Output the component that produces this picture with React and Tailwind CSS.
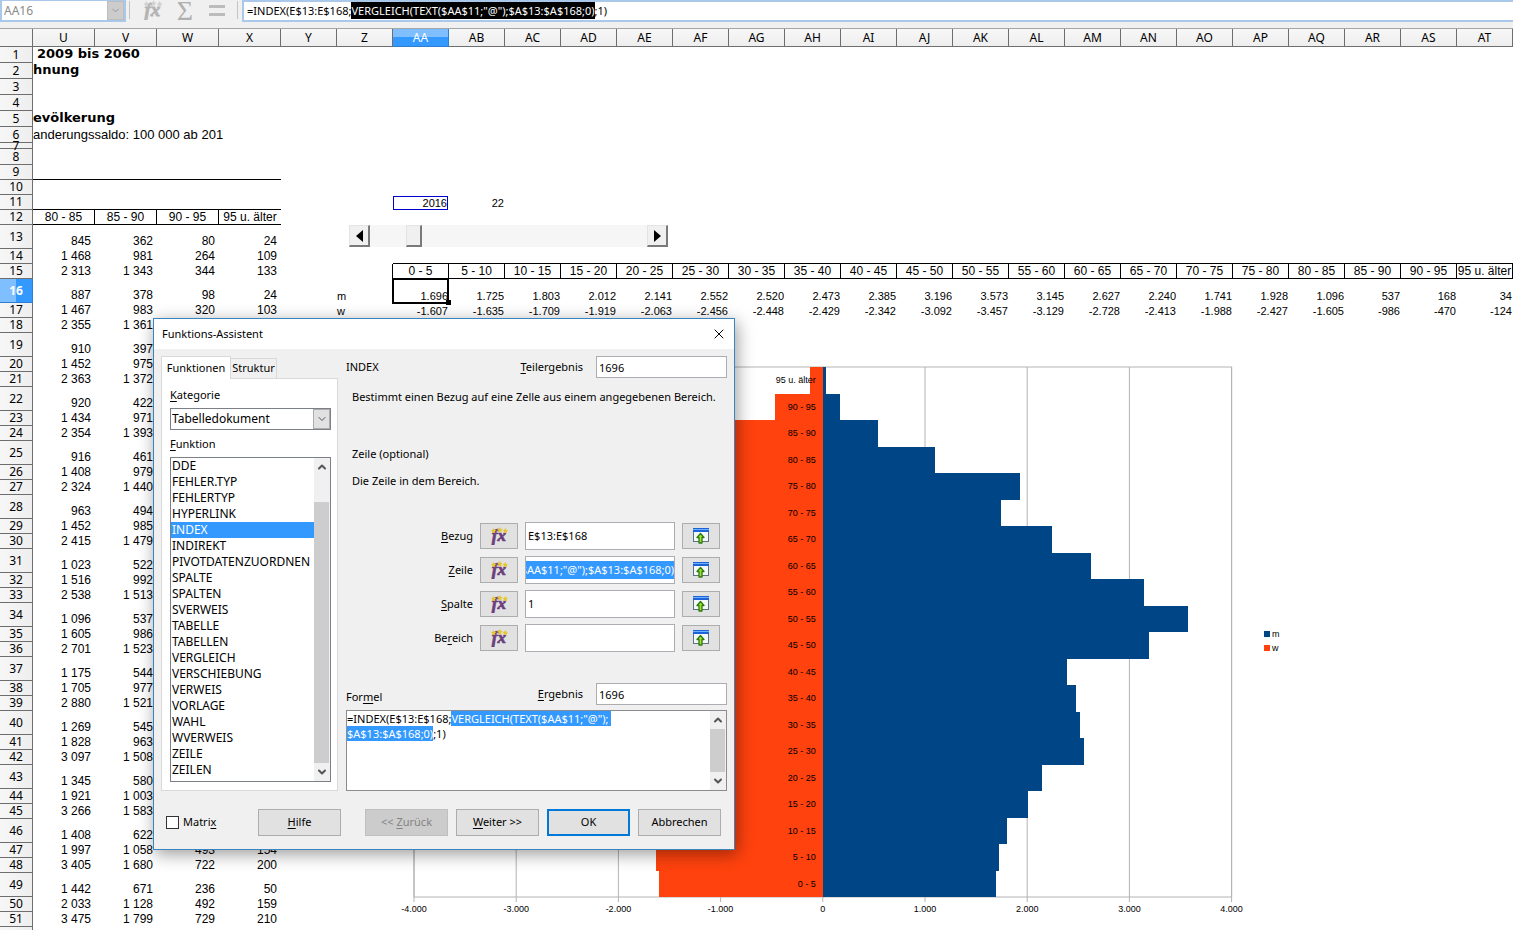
import { useEffect, useRef } from "react";
import { ChevronDown, ChevronUp, X } from "lucide-react";
import clsx from "clsx";

const ageColumns = [
  { name: "AA", label: "0 - 5", m: 1696, w: -1607 },
  { name: "AB", label: "5 - 10", m: 1725, w: -1635 },
  { name: "AC", label: "10 - 15", m: 1803, w: -1709 },
  { name: "AD", label: "15 - 20", m: 2012, w: -1919 },
  { name: "AE", label: "20 - 25", m: 2141, w: -2063 },
  { name: "AF", label: "25 - 30", m: 2552, w: -2456 },
  { name: "AG", label: "30 - 35", m: 2520, w: -2448 },
  { name: "AH", label: "35 - 40", m: 2473, w: -2429 },
  { name: "AI", label: "40 - 45", m: 2385, w: -2342 },
  { name: "AJ", label: "45 - 50", m: 3196, w: -3092 },
  { name: "AK", label: "50 - 55", m: 3573, w: -3457 },
  { name: "AL", label: "55 - 60", m: 3145, w: -3129 },
  { name: "AM", label: "60 - 65", m: 2627, w: -2728 },
  { name: "AN", label: "65 - 70", m: 2240, w: -2413 },
  { name: "AO", label: "70 - 75", m: 1741, w: -1988 },
  { name: "AP", label: "75 - 80", m: 1928, w: -2427 },
  { name: "AQ", label: "80 - 85", m: 1096, w: -1605 },
  { name: "AR", label: "85 - 90", m: 537, w: -986 },
  { name: "AS", label: "90 - 95", m: 168, w: -470 },
  { name: "AT", label: "95 u. älter", m: 34, w: -124 },
];

const wideColumns = ["U", "V", "W", "X"];
const wideLabels = ["80 - 85", "85 - 90", "90 - 95", "95 u. älter"];

// rows 13 and up, columns U to X
const population = [
  ["845", "362", "80", "24"],
  ["1 468", "981", "264", "109"],
  ["2 313", "1 343", "344", "133"],
  ["887", "378", "98", "24"],
  ["1 467", "983", "320", "103"],
  ["2 355", "1 361"],
  ["910", "397"],
  ["1 452", "975"],
  ["2 363", "1 372"],
  ["920", "422"],
  ["1 434", "971"],
  ["2 354", "1 393"],
  ["916", "461"],
  ["1 408", "979"],
  ["2 324", "1 440"],
  ["963", "494"],
  ["1 452", "985"],
  ["2 415", "1 479"],
  ["1 023", "522"],
  ["1 516", "992"],
  ["2 538", "1 513"],
  ["1 096", "537"],
  ["1 605", "986"],
  ["2 701", "1 523"],
  ["1 175", "544"],
  ["1 705", "977"],
  ["2 880", "1 521"],
  ["1 269", "545"],
  ["1 828", "963"],
  ["3 097", "1 508"],
  ["1 345", "580"],
  ["1 921", "1 003"],
  ["3 266", "1 583"],
  ["1 408", "622"],
  ["1 997", "1 058", "493", "154"],
  ["3 405", "1 680", "722", "200"],
  ["1 442", "671", "236", "50"],
  ["2 033", "1 128", "492", "159"],
  ["3 475", "1 799", "729", "210"],
];

const functionNames = [
  "DDE",
  "FEHLER.TYP",
  "FEHLERTYP",
  "HYPERLINK",
  "INDEX",
  "INDIREKT",
  "PIVOTDATENZUORDNEN",
  "SPALTE",
  "SPALTEN",
  "SVERWEIS",
  "TABELLE",
  "TABELLEN",
  "VERGLEICH",
  "VERSCHIEBUNG",
  "VERWEIS",
  "VORLAGE",
  "WAHL",
  "WVERWEIS",
  "ZEILE",
  "ZEILEN",
];

const titles = {
  1: "2009 bis 2060",
  2: "hnung",
  5: "evölkerung",
};

const formula = '=INDEX(E$13:E$168;VERGLEICH(TEXT($AA$11;"@");\n$A$13:$A$168;0);1)';

const formatNumber = (n) => {
  const s = String(Math.abs(n));
  const text = s.length > 3 ? `${s.slice(0, -3)}.${s.slice(-3)}` : s;
  return n < 0 ? `-${text}` : text;
};

const rowHeight = (row) => {
  if (row === 7) return "h-[6px]";
  if (row <= 8) return "h-[16px]";
  if (row >= 13 && row % 3 === 1) return "h-[24px]";
  return "h-[15px]";
};

// label with its underlined access key
const Key = ({ text, at }) => (
  <>
    {text.slice(0, at)}
    <span className="underline underline-offset-2">{text[at]}</span>
    {text.slice(at + 1)}
  </>
);

const FxGlyph = ({ star, ink, className }) => (
  <svg viewBox="0 0 20 20" className={className} aria-hidden="true">
    <text
      x="2"
      y="16"
      fill={ink}
      stroke={ink}
      strokeWidth="0.8"
      fontSize="19"
      fontStyle="italic"
      fontWeight="bold"
      fontFamily="Liberation Serif, serif"
    >
      fx
    </text>
    <g fill={star}>
      <path d="M4 1l1 2 2 .4-1.400 1.400.3 2.200L4 6l-1.900 1 .300-2.200L1 3.400l2-.4z" />
      <path d="M11 0l1 2 2 .4-1.400 1.400.3 2.200L11 5l-1.900 1 .300-2.200L8 2.400l2-.4z" />
      <path d="M17 1l1 2 2 .4-1.400 1.400.3 2.200L17 6l-1.900 1 .300-2.200L14 3.400l2-.4z" />
    </g>
  </svg>
);

const ShrinkGlyph = () => (
  <svg viewBox="0 0 16 16" className="h-4 w-4" aria-hidden="true">
    <rect x="0.500" y="0.500" width="15" height="13" fill="#f4f8fb" stroke="#5d7284" />
    <rect x="0" y="0" width="16" height="4" fill="#1c62d8" />
    <rect x="0" y="1" width="16" height="1" fill="#6fb0ff" />
    <path
      d="M7.500 5.500L11 9.500H9V15H6V9.500H4z"
      fill="#a4e02a"
      stroke="#2c7a12"
      strokeWidth="1.3"
      strokeLinejoin="round"
    />
  </svg>
);

const Toolbar = () => (
  <header className="flex h-[29px] shrink-0 items-start border-b border-[#a5a5a5] bg-[#f0f0f0]">
    <div className="flex h-[22px] w-[126px] border-2 border-t border-[#a9c8ea] bg-white">
      <input
        aria-label="Namensfeld"
        defaultValue="AA16"
        className="min-w-0 flex-1 px-[2px] text-xs text-[#8a8a8a] outline-none"
      />
      <button
        aria-label="Namen"
        className="flex w-[17px] items-center justify-center border border-[#bdbdbd] bg-[#cccccc] text-[#8f8f8f]"
      >
        <ChevronDown size={11} />
      </button>
    </div>
    <div className="mx-[3px] mt-px h-[18px] w-px bg-[#c4c4c4]" />
    <button aria-label="Funktions-Assistent" className="ml-[9px]">
      <FxGlyph star="#d2d2d2" ink="#b4b4b4" className="h-[20px] w-[21px]" />
    </button>
    <button
      aria-label="Summe"
      className="ml-[12px] h-[22px] w-[20px] font-['Liberation_Serif',serif] text-[28px] leading-[20px] text-[#b0b0b0]"
    >
      Σ
    </button>
    <button aria-label="Funktion" className="mt-[5px] ml-[14px] flex h-[11px] w-[16px] flex-col justify-between">
      <span className="h-[3px] w-full bg-[#bcbcbc]" />
      <span className="h-[3px] w-full bg-[#bcbcbc]" />
    </button>
    <div className="mt-px mr-[4px] ml-[12px] h-[18px] w-px bg-[#c4c4c4]" />
    <div className="grid h-[22px] min-w-0 flex-1 items-center border-2 border-r-0 border-[#a9c8ea] bg-white pl-[3px] text-[11px]">
      <input
        aria-label="Eingabezeile"
        defaultValue={formula.replace("\n", "")}
        className="col-start-1 row-start-1 text-transparent outline-none"
      />
      <p aria-hidden="true" className="pointer-events-none col-start-1 row-start-1 leading-[18px] whitespace-pre">
        =INDEX(E$13:E$168;
        <mark className="bg-black py-px text-white">VERGLEICH(TEXT($AA$11;"@");$A$13:$A$168;0)</mark>
        ;1)
      </p>
    </div>
  </header>
);

const ColumnHeader = ({ name }) => (
  <th
    scope="col"
    className={clsx(
      "h-[18px] border-r border-b p-0 text-center text-xs leading-[15px] font-normal",
      name === "AA"
        ? "border-[#2f7fd0] bg-linear-to-b from-[#80bfff] from-50% to-[#3399ff] to-50% text-white"
        : "border-[#6e6e6e] bg-linear-to-b from-[#f7f7f7] to-[#eeeeee]"
    )}
  >
    {name}
  </th>
);

const RowHeader = ({ row }) => (
  <th
    scope="row"
    className={clsx(
      "border-r border-b p-0 align-middle text-xs",
      row === 16
        ? "border-[#2f7fd0] bg-linear-to-r from-[#80bfff] from-50% to-[#3399ff] to-50% font-bold text-white"
        : "border-[#6e6e6e] bg-linear-to-r from-[#f7f7f7] to-[#eeeeee] font-normal"
    )}
  >
    <div className={clsx("flex items-center justify-center", row === 7 ? "h-[5px]" : "h-[14px]")}>
      {row < 52 && row}
    </div>
  </th>
);

const WideCells = ({ row }) => {
  if (titles[row] || row === 6) {
    return (
      <td colSpan={4} className="overflow-hidden p-0 align-top whitespace-nowrap">
        <div
          className={clsx(
            "text-[13px]",
            row === 6
              ? "font-['Liberation_Sans',sans-serif] leading-[15px]"
              : "font-['DejaVu_Sans',sans-serif] leading-[13px] font-bold",
            row === 1 && "pl-1"
          )}
        >
          {row === 6 ? "anderungssaldo: 100 000 ab 201" : titles[row]}
        </div>
      </td>
    );
  }
  return wideColumns.map((name, i) => (
    <td
      key={name}
      className={clsx(
        "p-0 align-bottom font-['Liberation_Sans',sans-serif] text-xs leading-[14px] whitespace-nowrap",
        (row === 9 || row === 11 || row === 12) && "border-b border-black",
        row === 12 ? "text-center" : "pr-1 text-right",
        row > 12 && "pb-px",
        row === 12 && i < 3 && "border-r"
      )}
    >
      {row === 12 ? wideLabels[i] : population[row - 13]?.[i]}
    </td>
  ));
};

const AgeCell = ({ row, column, index }) => {
  const small = "p-0 pr-px pb-px text-right align-bottom text-[11px] leading-[12px]";
  if (row === 11 && index === 0) {
    return (
      <td className="p-0">
        <div className="mr-px h-[14px] border border-[#0000cc] text-right text-[11px] leading-[13px]">2016</div>
      </td>
    );
  }
  if (row === 11 && index === 1) return <td className={small}>22</td>;
  if (row === 14) return <td className="border-b border-black p-0" />;
  if (row === 15) {
    return (
      <td className="border-r border-b border-black p-0 text-center text-xs leading-[14px] whitespace-nowrap">
        {column.label}
      </td>
    );
  }
  if (row === 16 && index === 0) {
    return (
      <td className={clsx(small, "relative")}>
        {formatNumber(column.m)}
        <div className="absolute -inset-px right-0 border-2 border-black" />
        <div className="absolute -right-[2px] -bottom-[2px] h-[5px] w-[5px] bg-black" />
      </td>
    );
  }
  if (row === 16) return <td className={small}>{formatNumber(column.m)}</td>;
  if (row === 17) return <td className={small}>{formatNumber(column.w)}</td>;
  return <td className="p-0" />;
};

const Sheet = () => {
  const rows = Array.from({ length: 52 }, (_, i) => i + 1);
  return (
    <table className="w-full min-w-[1513px] table-fixed border-separate border-spacing-0">
      <colgroup>
        <col className="w-[33px]" />
        <col span={4} className="w-[62px]" />
        <col span={22} className="w-[56px]" />
      </colgroup>
      <thead>
        <tr>
          <td className="border-r border-b border-[#6e6e6e] bg-[#f4f4f4] p-0" />
          {wideColumns.map((name) => (
            <ColumnHeader key={name} name={name} />
          ))}
          <ColumnHeader name="Y" />
          <ColumnHeader name="Z" />
          {ageColumns.map((column) => (
            <ColumnHeader key={column.name} name={column.name} />
          ))}
        </tr>
      </thead>
      <tbody className="font-['Liberation_Sans',sans-serif]">
        {rows.map((row) => (
          <tr key={row} className={clsx(rowHeight(row), "[&>th]:font-['Noto_Sans',sans-serif]")}>
            <RowHeader row={row} />
            <WideCells row={row} />
            <td className="p-0" />
            <td
              className={clsx(
                "p-0 pb-px align-bottom text-[11px] leading-[12px]",
                row === 15 && "border-r border-black"
              )}
            >
              {row === 16 && "m"}
              {row === 17 && "w"}
            </td>
            {ageColumns.map((column, i) => (
              <AgeCell key={column.name} row={row} column={column} index={i} />
            ))}
          </tr>
        ))}
      </tbody>
    </table>
  );
};

const bevel =
  "flex h-[22px] w-[21px] items-center justify-center border-t border-l border-r-2 border-b-2 border-t-[#e3e3e3] border-l-[#e3e3e3] border-r-[#7a7a7a] border-b-[#7a7a7a] bg-[#f0f0f0]";

const YearScroller = () => (
  <div className="absolute top-[196px] left-[349px] flex w-[319px] bg-[#f6f6f6]">
    <button aria-label="Jahr zurück" className={bevel}>
      <span className="h-0 w-0 border-y-[6px] border-r-[7px] border-y-transparent border-r-black" />
    </button>
    <input
      type="range"
      aria-label="Jahr"
      min="2009"
      max="2060"
      defaultValue="2016"
      className="h-[22px] min-w-0 flex-1 appearance-none bg-transparent [&::-webkit-slider-thumb]:h-[22px] [&::-webkit-slider-thumb]:w-[16px] [&::-webkit-slider-thumb]:appearance-none [&::-webkit-slider-thumb]:border-t [&::-webkit-slider-thumb]:border-r-2 [&::-webkit-slider-thumb]:border-b-2 [&::-webkit-slider-thumb]:border-l [&::-webkit-slider-thumb]:border-t-[#e3e3e3] [&::-webkit-slider-thumb]:border-r-[#7a7a7a] [&::-webkit-slider-thumb]:border-b-[#7a7a7a] [&::-webkit-slider-thumb]:border-l-[#e3e3e3] [&::-webkit-slider-thumb]:bg-[#f0f0f0]"
    />
    <button aria-label="Jahr vor" className={bevel}>
      <span className="h-0 w-0 border-y-[6px] border-l-[7px] border-y-transparent border-l-black" />
    </button>
  </div>
);

const PyramidChart = () => {
  const left = 24;
  const top = 8;
  const step = 26.5;
  const unit = 102.2 / 1000;
  const zero = left + 4000 * unit;
  const bottom = top + step * ageColumns.length;
  const ticks = [-4, -3, -2, -1, 0, 1, 2, 3, 4];
  const barTop = (i) => bottom - step * (i + 1);

  return (
    <svg
      width="900"
      height="560"
      viewBox="0 0 900 560"
      role="img"
      aria-label="Bevölkerungspyramide"
      className="absolute top-[330px] left-[390px] font-['Liberation_Sans',sans-serif] text-[9px]"
    >
      <rect x={left} y={top} width={8000 * unit} height={bottom - top} fill="none" stroke="#b3b3b3" />
      {ticks.map((t) => (
        <line
          key={t}
          x1={zero + t * 1000 * unit}
          x2={zero + t * 1000 * unit}
          y1={top}
          y2={bottom + 5}
          stroke="#b3b3b3"
        />
      ))}
      <g shapeRendering="crispEdges">
        {ageColumns.map((c, i) => (
          <g key={c.name}>
            <rect x={zero + c.w * unit} y={barTop(i)} width={-c.w * unit} height={step} fill="#ff420e" />
            <rect x={zero} y={barTop(i)} width={c.m * unit} height={step} fill="#004586" />
          </g>
        ))}
      </g>
      {ageColumns.map((c, i) => (
        <text key={c.name} x={zero - 7} y={barTop(i) + 16} textAnchor="end">
          {c.label}
        </text>
      ))}
      {ticks.map((t) => (
        <text key={t} x={zero + t * 1000 * unit} y={bottom + 15} textAnchor="middle">
          {formatNumber(t * 1000)}
        </text>
      ))}
      <rect x="874" y="272" width="6" height="6" fill="#004586" />
      <text x="882" y="278">m</text>
      <rect x="874" y="286" width="6" height="6" fill="#ff420e" />
      <text x="882" y="292">w</text>
    </svg>
  );
};

const ScrollBar = ({ thumb }) => (
  <div className="flex w-[16px] shrink-0 flex-col items-center bg-[#f0f0f0] text-[#555555]">
    <ChevronUp size={12} strokeWidth={4} className="my-[3px] shrink-0" />
    <div className={clsx("flex-1 self-stretch", thumb)}>
      <div className="h-full w-[15px] bg-[#cdcdcd]" />
    </div>
    <ChevronDown size={12} strokeWidth={4} className="my-[3px] shrink-0" />
  </div>
);

const FunctionTab = () => (
  <section className="flex w-[177px] shrink-0 flex-col">
    <div role="tablist" className="flex items-end">
      <button
        role="tab"
        aria-selected="true"
        className="relative z-10 -mb-px h-[23px] w-[70px] border border-b-0 border-[#d9d9d9] bg-white"
      >
        Funktionen
      </button>
      <button role="tab" aria-selected="false" className="h-[20px] w-[46px] border border-b-0 border-l-0 border-[#d9d9d9]">
        Struktur
      </button>
    </div>
    <div className="flex flex-1 flex-col border border-[#d9d9d9] bg-white pt-[8px] pr-[6px] pb-[8px] pl-[8px]">
      <label htmlFor="kategorie" className="leading-[16px]">
        <Key text="Kategorie" at={0} />
      </label>
      <div className="relative mt-[5px] text-xs">
        <select
          id="kategorie"
          className="h-[22px] w-full appearance-none border border-[#7a7f88] bg-white px-px outline-none"
        >
          <option>Tabelledokument</option>
        </select>
        <span className="pointer-events-none absolute inset-y-px right-px flex w-[17px] items-center justify-center border border-[#adadad] bg-[#e1e1e1] text-[#555555]">
          <ChevronDown size={12} />
        </span>
      </div>
      <span id="funktion" className="mt-[6px] leading-[16px]">
        <Key text="Funktion" at={0} />
      </span>
      <div className="mt-[5px] flex flex-1 border border-[#7a7f88] text-xs">
        <ul role="listbox" aria-labelledby="funktion" className="min-w-0 flex-1 pb-[2px]">
          {functionNames.map((name) => (
            <li
              key={name}
              role="option"
              aria-selected={name === "INDEX"}
              className={clsx("h-[16px] pl-px leading-[16px]", name === "INDEX" && "bg-[#3399ff] text-white")}
            >
              {name}
            </li>
          ))}
        </ul>
        <ScrollBar thumb="pt-[26px]" />
      </div>
    </div>
  </section>
);

const ArgumentRow = ({ label, at, value, selected }) => {
  const input = useRef(null);

  useEffect(() => {
    // keep the end of a long argument in view
    if (selected) input.current.scrollLeft = input.current.scrollWidth;
  }, [selected]);

  return (
    <div className="flex h-[28px] items-center">
      <label htmlFor={label} className="flex-1 pr-[7px] text-right">
        <Key text={label} at={at} />
      </label>
      <button
        aria-label={`Funktion für ${label}`}
        className="flex h-[26px] w-[38px] items-center justify-center border border-[#adadad] bg-[#e1e1e1]"
      >
        <FxGlyph star="#e6c62e" ink="#6b3f7c" className="h-[18px] w-[18px]" />
      </button>
      <div className="mx-[7px] flex h-[28px] w-[150px] border border-[#abadb3] bg-white">
        <input
          ref={input}
          id={label}
          defaultValue={value}
          className={clsx(
            "w-full outline-none",
            selected ? "bg-[#3399ff] bg-clip-content py-[4px] text-white" : "px-[2px]"
          )}
        />
      </div>
      <button
        aria-label={`${label} verkleinern`}
        className="flex h-[26px] w-[38px] items-center justify-center border border-[#adadad] bg-[#e1e1e1]"
      >
        <ShrinkGlyph />
      </button>
    </div>
  );
};

const ResultField = ({ id, label }) => (
  <div className="flex items-center">
    <label htmlFor={id} className="pr-[13px]">
      <Key text={label} at={0} />
    </label>
    <input
      id={id}
      readOnly
      defaultValue="1696"
      className="h-[22px] w-[131px] border border-[#abadb3] bg-white px-[2px] outline-none"
    />
  </div>
);

const FormulaPane = () => {
  const formulaBox = useRef(null);

  useEffect(() => {
    formulaBox.current.focus();
    formulaBox.current.setSelectionRange(formula.indexOf("VERGLEICH"), formula.lastIndexOf(";"));
  }, []);

  return (
    <section className="flex min-w-0 flex-1 flex-col pl-[8px]">
      <div className="flex items-center justify-between">
        <p>INDEX</p>
        <ResultField id="teilergebnis" label="Teilergebnis" />
      </div>
      <div className="flex flex-col px-[6px] leading-[16px] whitespace-nowrap">
        <p className="mt-[11px]">Bestimmt einen Bezug auf eine Zelle aus einem angegebenen Bereich.</p>
        <p className="mt-[41px]">Zeile (optional)</p>
        <p className="mt-[11px]">Die Zeile in dem Bereich.</p>
      </div>
      <div className="mt-[33px] flex flex-col gap-[6px] pr-[7px]">
        <ArgumentRow label="Bezug" at={0} value="E$13:E$168" />
        <ArgumentRow label="Zeile" at={0} value={'VERGLEICH(TEXT($AA$11;"@");$A$13:$A$168;0)'} selected />
        <ArgumentRow label="Spalte" at={0} value="1" />
        <ArgumentRow label="Bereich" at={2} value="" />
      </div>
      <div className="mt-[31px] flex items-start justify-between">
        <label htmlFor="formel" className="pt-[6px] leading-[16px]">
          <Key text="Formel" at={3} />
        </label>
        <ResultField id="ergebnis" label="Ergebnis" />
      </div>
      <div className="mt-[5px] flex h-[81px] border border-[#8a8c90] bg-white">
        <textarea
          ref={formulaBox}
          id="formel"
          defaultValue={formula}
          className="min-w-0 flex-1 resize-none leading-[15px] outline-none selection:bg-[#3399ff] selection:text-white"
        />
        <ScrollBar />
      </div>
    </section>
  );
};

const dialogButton = "h-[27px] w-[83px] border border-[#adadad] bg-[#e1e1e1]";

const FunctionWizard = () => (
  <div
    role="dialog"
    aria-labelledby="dialog-title"
    className="absolute top-[289px] left-[153px] flex w-[582px] flex-col border border-[#3a84c0] bg-[#f0f0f0] text-[11px] shadow-[2px_4px_16px_rgba(0,0,0,0.4)]"
  >
    <div className="flex h-[30px] items-center justify-between bg-white pr-[7px] pl-[8px]">
      <h2 id="dialog-title">Funktions-Assistent</h2>
      <button aria-label="Schließen">
        <X size={16} strokeWidth={1.5} />
      </button>
    </div>
    <div className="flex px-[7px] pt-[7px]">
      <FunctionTab />
      <FormulaPane />
    </div>
    <div className="flex items-center pt-[18px] pr-[13px] pb-[13px] pl-[12px]">
      <label className="flex flex-1 items-center gap-[4px]">
        <input type="checkbox" className="h-[13px] w-[13px] appearance-none border border-[#333333] bg-white" />
        <span>
          <Key text="Matrix" at={5} />
        </span>
      </label>
      <button className={clsx(dialogButton, "mr-[24px]")}>
        <Key text="Hilfe" at={0} />
      </button>
      <div className="flex gap-[8px]">
        <button disabled className="h-[27px] w-[83px] border border-[#bfbfbf] bg-[#cccccc] text-[#838383]">
          &lt;&lt; <Key text="Zurück" at={0} />
        </button>
        <button className={dialogButton}>
          <Key text="Weiter" at={0} /> &gt;&gt;
        </button>
        <button className="h-[27px] w-[83px] border-2 border-[#0078d7] bg-[#e1e1e1]">OK</button>
        <button className={dialogButton}>Abbrechen</button>
      </div>
    </div>
  </div>
);

const App = () => (
  <div className="flex h-screen flex-col overflow-hidden bg-white font-['Noto_Sans',sans-serif] text-black">
    <Toolbar />
    <main className="relative min-h-0 flex-1 overflow-hidden">
      <Sheet />
      <YearScroller />
      <PyramidChart />
      <FunctionWizard />
    </main>
  </div>
);

export default App;
